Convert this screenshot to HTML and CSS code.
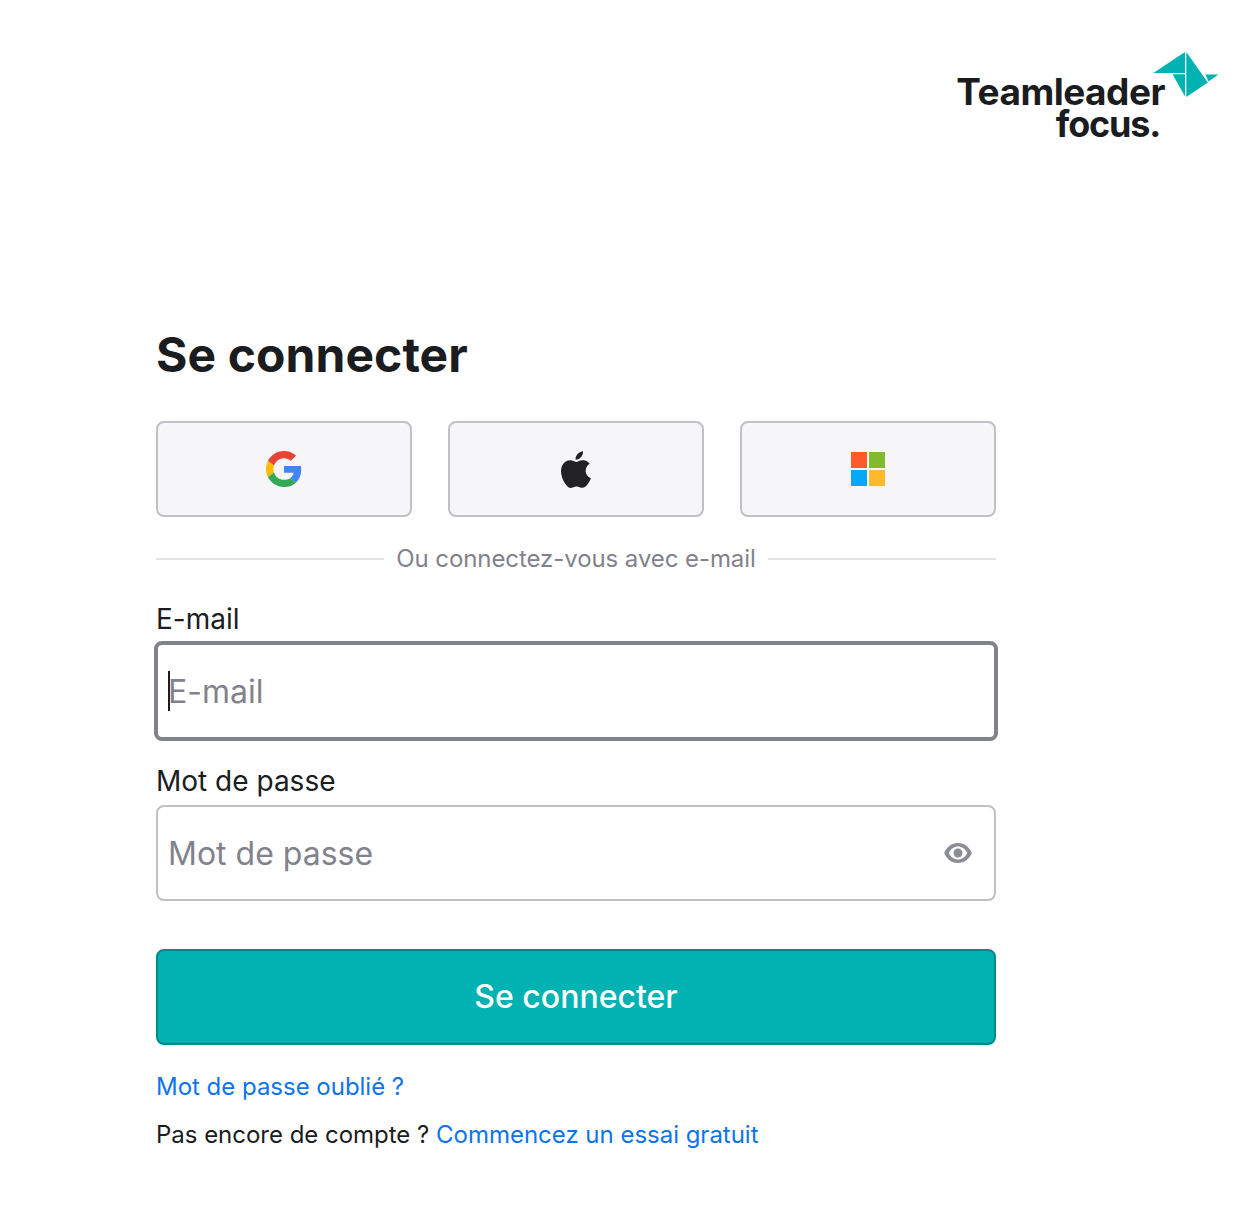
FILE: index.html
```html
<!DOCTYPE html>
<html lang="fr">
<head>
    <meta charset="UTF-8">
    <meta name="viewport" content="width=device-width, initial-scale=1.0">
    <title>Se connecter</title>
    <link rel="stylesheet" href="styles.css">
</head>
<body>
    <header class="top">
        <div class="logo">
            <svg class="logoMark" viewBox="0 0 66 48" width="66" height="48">
                <polygon points="0.3,22 32,1 32,22" fill="#00b2b2"/>
                <polygon points="33.3,1 54.800,31.500 33.300,46" fill="#00b2b2"/>
                <polygon points="19.500,23.300 32,23.300 32,45.500" fill="#00b2b2"/>
                <polygon points="52.500,23.500 65.500,23.500 55.500,30.500" fill="#00b2b2"/>
            </svg>
            <div class="logoLine">Teamleader</div>
            <div class="logoLine logoLineShort">focus.</div>
        </div>
    </header>

    <main class="login">
        <h1>Se connecter</h1>

        <div class="socials">
            <button class="socialBtn" type="button" aria-label="Google">
                <svg viewBox="0 0 48 48" width="36" height="36">
                    <path fill="#EA4335" d="M24 9.500c3.500 0 6.700 1.200 9.200 3.600l6.900-6.900C35.900 2.400 30.500 0 24 0 14.600 0 6.500 5.400 2.600 13.200l8 6.200C12.500 13.700 17.800 9.500 24 9.500z"/>
                    <path fill="#4285F4" d="M46.980 24.550c0-1.570-.15-3.090-.38-4.550H24v9.020h12.940c-.58 2.960-2.260 5.480-4.780 7.180l7.730 6c4.510-4.180 7.090-10.360 7.090-17.650z"/>
                    <path fill="#FBBC05" d="M10.530 28.590c-.48-1.450-.76-2.990-.76-4.590s.27-3.140.76-4.590l-7.980-6.190C.92 16.460 0 20.120 0 24c0 3.880.92 7.540 2.560 10.780l7.970-6.190z"/>
                    <path fill="#34A853" d="M24 48c6.480 0 11.930-2.130 15.890-5.810l-7.730-6c-2.150 1.450-4.920 2.300-8.160 2.300-6.260 0-11.570-4.220-13.470-9.910l-7.980 6.190C6.510 42.620 14.620 48 24 48z"/>
                </svg>
            </button>
            <button class="socialBtn" type="button" aria-label="Apple">
                <svg viewBox="4.500 4 25 30.500" width="32" height="39">
                    <path fill="#222224" d="M24.600 20.200c0-3.600 3-5.300 3.100-5.400-1.700-2.500-4.300-2.800-5.200-2.800-2.200-.2-4.300 1.300-5.400 1.300-1.100 0-2.900-1.300-4.700-1.200-2.400 0-4.700 1.400-5.900 3.500-2.500 4.400-.7 10.900 1.800 14.500 1.200 1.700 2.600 3.700 4.500 3.600 1.800-.1 2.500-1.200 4.700-1.200 2.200 0 2.800 1.200 4.700 1.100 2 0 3.200-1.700 4.400-3.500 1.400-2 2-4 2-4.100-.1 0-4-1.500-4-5.300z"/>
                    <path fill="#222224" d="M21 9.500c1-1.200 1.700-2.900 1.500-4.500-1.500.1-3.200 1-4.300 2.200-.9 1.100-1.700 2.800-1.500 4.400 1.700.1 3.300-.9 4.300-2.100z"/>
                </svg>
            </button>
            <button class="socialBtn" type="button" aria-label="Microsoft">
                <span class="msIcon">
                    <i class="msRed"></i><i class="msGreen"></i><i class="msBlue"></i><i class="msYellow"></i>
                </span>
            </button>
        </div>

        <div class="divider"><span>Ou connectez-vous avec e-mail</span></div>

        <label class="fieldLabel" for="email">E-mail</label>
        <div class="field fieldFocus">
            <span class="caret"></span>
            <input id="email" type="text" placeholder="E-mail">
        </div>

        <label class="fieldLabel" for="password">Mot de passe</label>
        <div class="field">
            <input id="password" type="password" placeholder="Mot de passe">
            <svg class="eye" viewBox="0 0 28 20" width="28" height="20">
                <path fill="#8c8c94" d="M14 0C7.800 0 2.400 4 .2 10c2.200 6 7.600 10 13.800 10s11.600-4 13.800-10C25.600 4 20.200 0 14 0zm0 16.500C10.200 16.500 6.700 14.200 4.700 10 6.700 5.800 10.200 3.500 14 3.500S21.300 5.800 23.300 10c-2 4.200-5.500 6.500-9.300 6.500z"/>
                <circle fill="#8c8c94" cx="14" cy="10" r="4.500"/>
            </svg>
        </div>

        <button class="submitBtn" type="button">Se connecter</button>

        <p class="linkRow"><a href="#">Mot de passe oublié ?</a></p>
        <p class="linkRow">Pas encore de compte ? <a href="#">Commencez un essai gratuit</a></p>
    </main>
</body>
</html>
```

FILE: styles.css
```css
* {
    box-sizing: border-box;
}

body {
    margin: 0;
    background: #fff;
    color: #1a1c20;
    font-family: Inter, "Liberation Sans", sans-serif;
}

.top {
    display: flex;
    justify-content: flex-end;
    padding: 76px 93px 0 0;
}

.logo {
    position: relative;
    text-align: right;
    font-size: 37px;
    font-weight: 700;
    line-height: 32px;
    letter-spacing: -0.5px;
}

.logoMark {
    position: absolute;
    left: 197px;
    top: -25px;
}

.logoLineShort {
    padding-right: 5px;
    font-size: 36px;
    letter-spacing: -1.2px;
}

.login {
    width: 840px;
    margin: 185px 0 0 156px;
}

h1 {
    margin: 0 0 36px;
    font-size: 48px;
    line-height: 60px;
    font-weight: 700;
    letter-spacing: 0.08px;
}

.socials {
    display: grid;
    grid-template-columns: repeat(3, 1fr);
    gap: 36px;
}

.socialBtn {
    display: flex;
    align-items: center;
    justify-content: center;
    height: 96px;
    background: #f6f6f8;
    border: 2px solid #c0c0c6;
    border-radius: 8px;
}

.msIcon {
    display: grid;
    grid-template-columns: 16px 16px;
    grid-auto-rows: 16px;
    gap: 2px;
}

.msRed { background: #ff5a2c; }
.msGreen { background: #83b92e; }
.msBlue { background: #03a9f4; }
.msYellow { background: #ffb92c; }

.divider {
    display: flex;
    align-items: center;
    gap: 12px;
    margin: 26px 0 26px;
    font-size: 24px;
    line-height: 32px;
    letter-spacing: -0.08px;
    color: #82828c;
    text-align: center;
}

.divider::before,
.divider::after {
    content: "";
    flex: 1;
    height: 2px;
    background: #e4e4e6;
}

.fieldLabel {
    display: block;
    margin-bottom: 4px;
    font-size: 28px;
    line-height: 36px;
}

.field {
    position: relative;
    height: 96px;
    margin-bottom: 24px;
    border: 2px solid #c0c0c6;
    border-radius: 8px;
    background: #fff;
}

.fieldFocus {
    height: 100px;
    margin: 0 -2px 22px;
    border: 4px solid #82828c;
}

.fieldFocus + .fieldLabel {
    margin-bottom: 6px;
}

.field input {
    width: 100%;
    height: 100%;
    padding: 0 10px;
    border: 0;
    outline: 0;
    background: transparent;
    color: #1a1c20;
    font: 32px Inter, "Liberation Sans", sans-serif;
}

.field input::placeholder {
    color: #82828c;
    opacity: 1;
}

.caret {
    position: absolute;
    left: 10px;
    top: 26px;
    width: 2px;
    height: 40px;
    background: #1a1c20;
}

.eye {
    position: absolute;
    right: 22px;
    top: 36px;
}

.submitBtn {
    display: block;
    width: 100%;
    height: 96px;
    margin: 48px 0 24px;
    padding-bottom: 2px;
    background: #00b2b2;
    border: 2px solid #008a8c;
    border-radius: 8px;
    color: #fff;
    font: 500 32px Inter, "Liberation Sans", sans-serif;
}

.linkRow {
    margin: 0 0 12px;
    font-size: 24px;
    line-height: 36px;
    letter-spacing: -0.02px;
}

.linkRow a {
    color: #0d74ec;
    text-decoration: none;
}
```
